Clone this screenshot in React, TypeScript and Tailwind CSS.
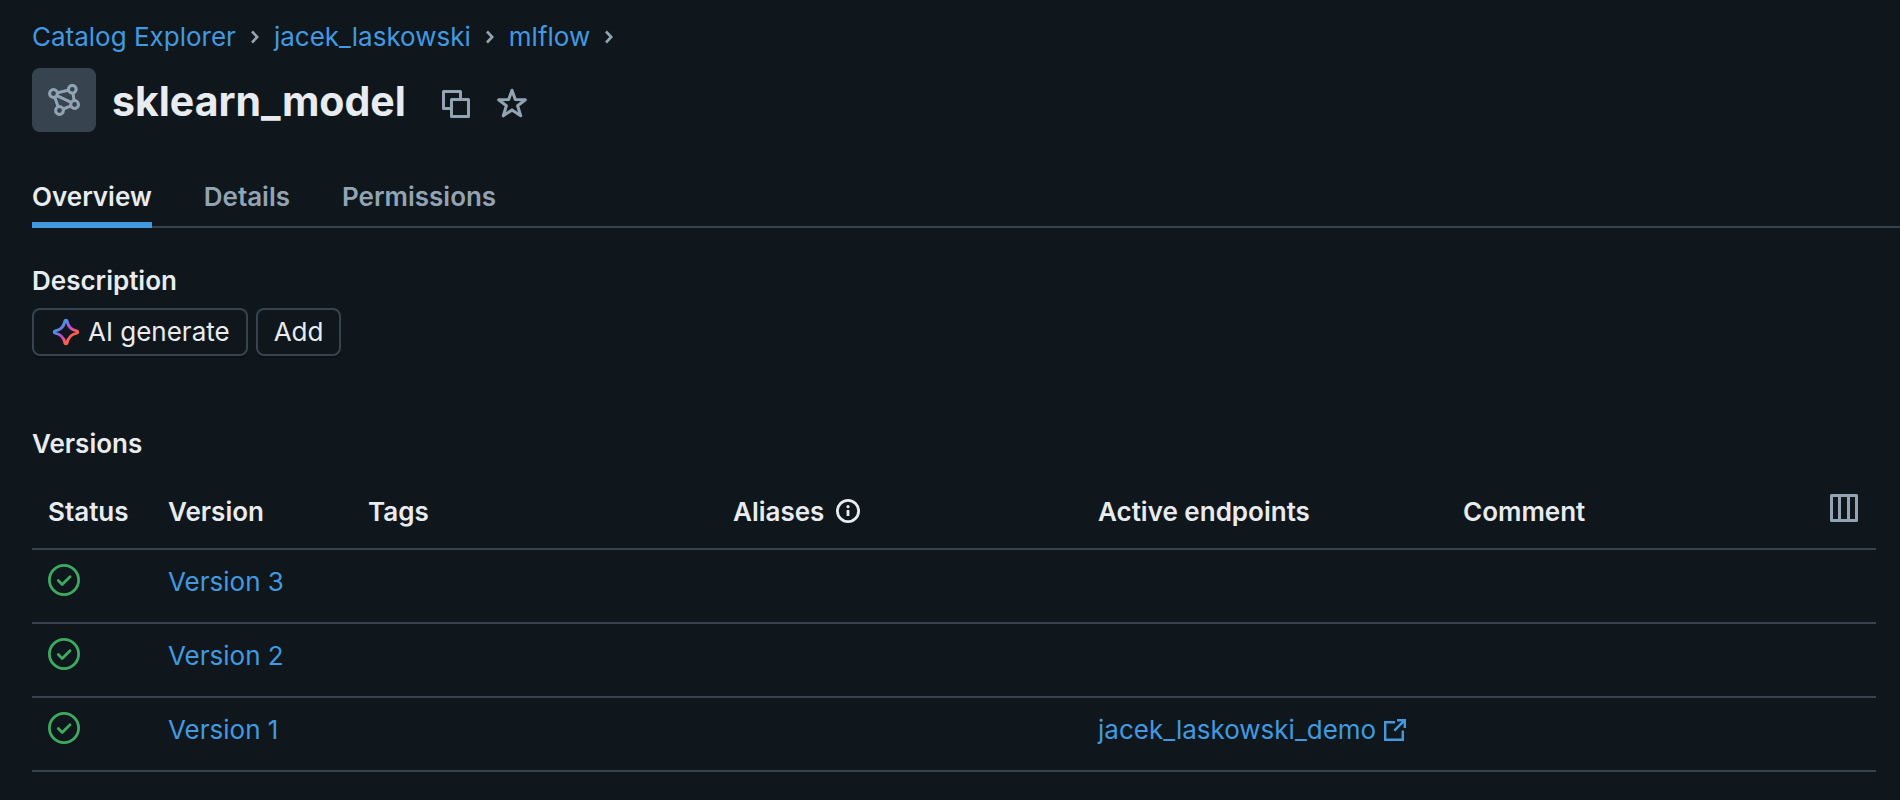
import type { ReactNode } from "react";

function Chevron() {
  return (
    <svg width="32" height="32" viewBox="0 0 32 32" className="shrink-0" aria-hidden="true">
      <path d="M13 10.5 18.2 16 13 21.5" fill="none" stroke="#92a4b3" strokeWidth="2.6" />
    </svg>
  );
}

function ModelIcon() {
  return (
    <svg width="32" height="32" viewBox="0 0 32 32" fill="none" stroke="#92a4b3" strokeWidth="3" aria-hidden="true">
      <circle cx="5.5" cy="9.5" r="3.9" />
      <circle cx="24.3" cy="5.3" r="3.9" />
      <circle cx="26.6" cy="20.5" r="3.9" />
      <circle cx="11.5" cy="26.5" r="3.9" />
      <path d="M9.3 8.7 20.4 6.2M25 9.3 26.1 16.5M23 21.9 15.3 25M6.8 13.3 10.1 22.8M8.9 11.6 23.2 18.4" />
    </svg>
  );
}

function CopyIcon() {
  return (
    <svg width="28" height="28" viewBox="0 0 28 28" fill="none" stroke="currentColor" strokeWidth="3" strokeLinejoin="round" aria-hidden="true">
      <path d="M18.5 9.5v-8h-17v17h8" />
      <path d="M9.5 9.5h17v17h-17z" />
    </svg>
  );
}

function StarIcon() {
  return (
    <svg width="32" height="32" viewBox="0 0 32 32" fill="none" stroke="currentColor" strokeWidth="3" strokeLinejoin="round" aria-hidden="true">
      <path d="M16 3.2 19.3 12.6 29.4 12.8 21.6 18.8 24.7 28.8 16 22.9 7.3 28.8 10.4 18.8 2.6 12.8 12.7 12.6Z" />
    </svg>
  );
}

function SparkleIcon() {
  return (
    <svg width="30" height="28" viewBox="-2 0 30 28" fill="none" aria-hidden="true">
      <defs>
        <linearGradient id="sparkle" x1="4" y1="4" x2="24" y2="24" gradientUnits="userSpaceOnUse">
          <stop offset="0.2" stopColor="#4299e0" />
          <stop offset="0.47" stopColor="#ca42e0" />
          <stop offset="0.76" stopColor="#ff5f46" />
        </linearGradient>
      </defs>
      <path
        d="M12.9 3.2C13.2 2 14.8 2 15.1 3.2 16.2 8.8 19 11.7 24.8 12.9 26 13.2 26 14.8 24.8 15.1 19 16.3 16.2 19.2 15.1 24.8 14.8 26 13.2 26 12.9 24.8 11.8 19.2 9 16.3 3.2 15.1 2 14.8 2 13.2 3.2 12.9 9 11.7 11.8 8.8 12.9 3.2Z"
        stroke="url(#sparkle)"
        strokeWidth="3"
        strokeLinejoin="round"
      />
    </svg>
  );
}

function InfoIcon() {
  return (
    <svg width="24" height="24" viewBox="0 0 24 24" fill="none" stroke="#e8ecf0" aria-hidden="true">
      <circle cx="12" cy="12" r="10.6" strokeWidth="2.8" />
      <path d="M12 11v6" strokeWidth="2.8" />
      <circle cx="12" cy="7.7" r="1.6" fill="#e8ecf0" stroke="none" />
    </svg>
  );
}

function ColumnsIcon() {
  return (
    <svg width="28" height="28" viewBox="0 0 28 28" fill="none" stroke="currentColor" strokeWidth="3" strokeLinejoin="round" aria-hidden="true">
      <path d="M1.5 1.5h25v25h-25zM9.5 1.5v25M18.5 1.5v25" />
    </svg>
  );
}

function ReadyIcon() {
  return (
    <svg width="32" height="32" viewBox="0 0 32 32" fill="none" stroke="#3caa60" role="img" aria-label="Ready">
      <circle cx="16" cy="16" r="14.6" strokeWidth="2.8" />
      <path d="M10.3 16.6 14.2 20.4 22 12.8" strokeWidth="2.8" strokeLinecap="round" strokeLinejoin="round" />
    </svg>
  );
}

function ExternalIcon() {
  return (
    <svg width="22" height="22" viewBox="0 0 22 22" fill="none" stroke="currentColor" strokeWidth="2.4" aria-hidden="true">
      <path d="M11 3.2H1.2V20.8H18.8V11.5" />
      <path d="M13 1.2H20.8V9M20.3 1.7 10.3 11.7" />
    </svg>
  );
}

function Button({ children }: { children: ReactNode }) {
  return (
    <button
      type="button"
      className="flex h-12 items-center gap-2 rounded-lg border-2 border-[#37444f] px-4 shadow-[0_2px_0_rgba(0,0,0,0.3)]"
    >
      {children}
    </button>
  );
}

const crumbs = ["Catalog Explorer", "jacek_laskowski", "mlflow"];
const tabs = ["Overview", "Details", "Permissions"];
const versions = [
  { name: "Version 3", endpoint: "" },
  { name: "Version 2", endpoint: "" },
  { name: "Version 1", endpoint: "jacek_laskowski_demo" },
];

export default function App() {
  return (
    <main className="min-h-screen bg-[#10171c] pt-[17px] pl-8 font-['Inter',sans-serif] text-[26px] leading-10 text-[#e8ecf0]">
      <nav aria-label="Breadcrumb" className="flex items-center">
        {crumbs.map((crumb) => (
          <span key={crumb} className="flex items-center">
            <a href="#" className="text-[#4299e0]">{crumb}</a>
            <span className="flex px-[3px]"><Chevron /></span>
          </span>
        ))}
      </nav>

      <header className="mt-[11px] flex items-center">
        <div className="flex size-16 items-center justify-center rounded-lg bg-[#37444f]">
          <ModelIcon />
        </div>
        <h1 className="ml-4 pt-[2px] text-[41px] font-bold">sklearn_model</h1>
        <div className="ml-9 flex items-center gap-[26px] pt-2 text-[#92a4b3]">
          <button type="button" aria-label="Copy name"><CopyIcon /></button>
          <button type="button" aria-label="Add to favorites" className="pb-[2px]"><StarIcon /></button>
        </div>
      </header>

      <div role="tablist" className="mt-[45px] flex gap-13 border-b-2 border-[#37444f] font-semibold">
        {tabs.map((tab, i) => (
          <button
            key={tab}
            type="button"
            role="tab"
            aria-selected={i === 0}
            className={
              i === 0
                ? "-mb-[2px] border-b-6 border-[#4299e0] pb-[5px]"
                : "-mb-[2px] border-b-6 border-transparent pb-[5px] text-[#92a4b3]"
            }
          >
            {tab}
          </button>
        ))}
      </div>

      <section className="mt-[33px]">
        <h2 className="font-semibold">Description</h2>
        <div className="mt-[7px] flex gap-2">
          <Button><SparkleIcon />AI generate</Button>
          <Button>Add</Button>
        </div>
      </section>

      <section className="mt-17 pr-6">
        <h2 className="font-semibold">Versions</h2>
        <table className="mt-7 w-full table-fixed border-separate border-spacing-0 text-left">
          <colgroup>
            <col className="w-[120px]" />
            <col className="w-[200px]" />
            <col />
            <col />
            <col />
            <col />
            <col className="w-16" />
          </colgroup>
          <thead>
            <tr className="align-top *:border-b-2 *:border-[#37444f] *:px-4 *:pb-4 *:font-semibold">
              <th>Status</th>
              <th>Version</th>
              <th>Tags</th>
              <th>
                <span className="flex items-center gap-3">
                  Aliases
                  <span className="pb-[2px]"><InfoIcon /></span>
                </span>
              </th>
              <th>Active endpoints</th>
              <th>Comment</th>
              <th>
                <button type="button" aria-label="Choose columns" className="flex w-full justify-center pt-[2px] text-[#92a4b3]">
                  <ColumnsIcon />
                </button>
              </th>
            </tr>
          </thead>
          <tbody>
            {versions.map((version) => (
              <tr key={version.name} className="h-[74px] align-top *:border-b-2 *:border-[#37444f] *:px-4 *:pt-3">
                <td><span className="flex pt-[2px]"><ReadyIcon /></span></td>
                <td><a href="#" className="text-[#4299e0]">{version.name}</a></td>
                <td />
                <td />
                <td>
                  {version.endpoint && (
                    <a href="#" className="flex items-center gap-2 text-[#4299e0]">
                      {version.endpoint}
                      <ExternalIcon />
                    </a>
                  )}
                </td>
                <td />
                <td />
              </tr>
            ))}
          </tbody>
        </table>
      </section>
    </main>
  );
}
